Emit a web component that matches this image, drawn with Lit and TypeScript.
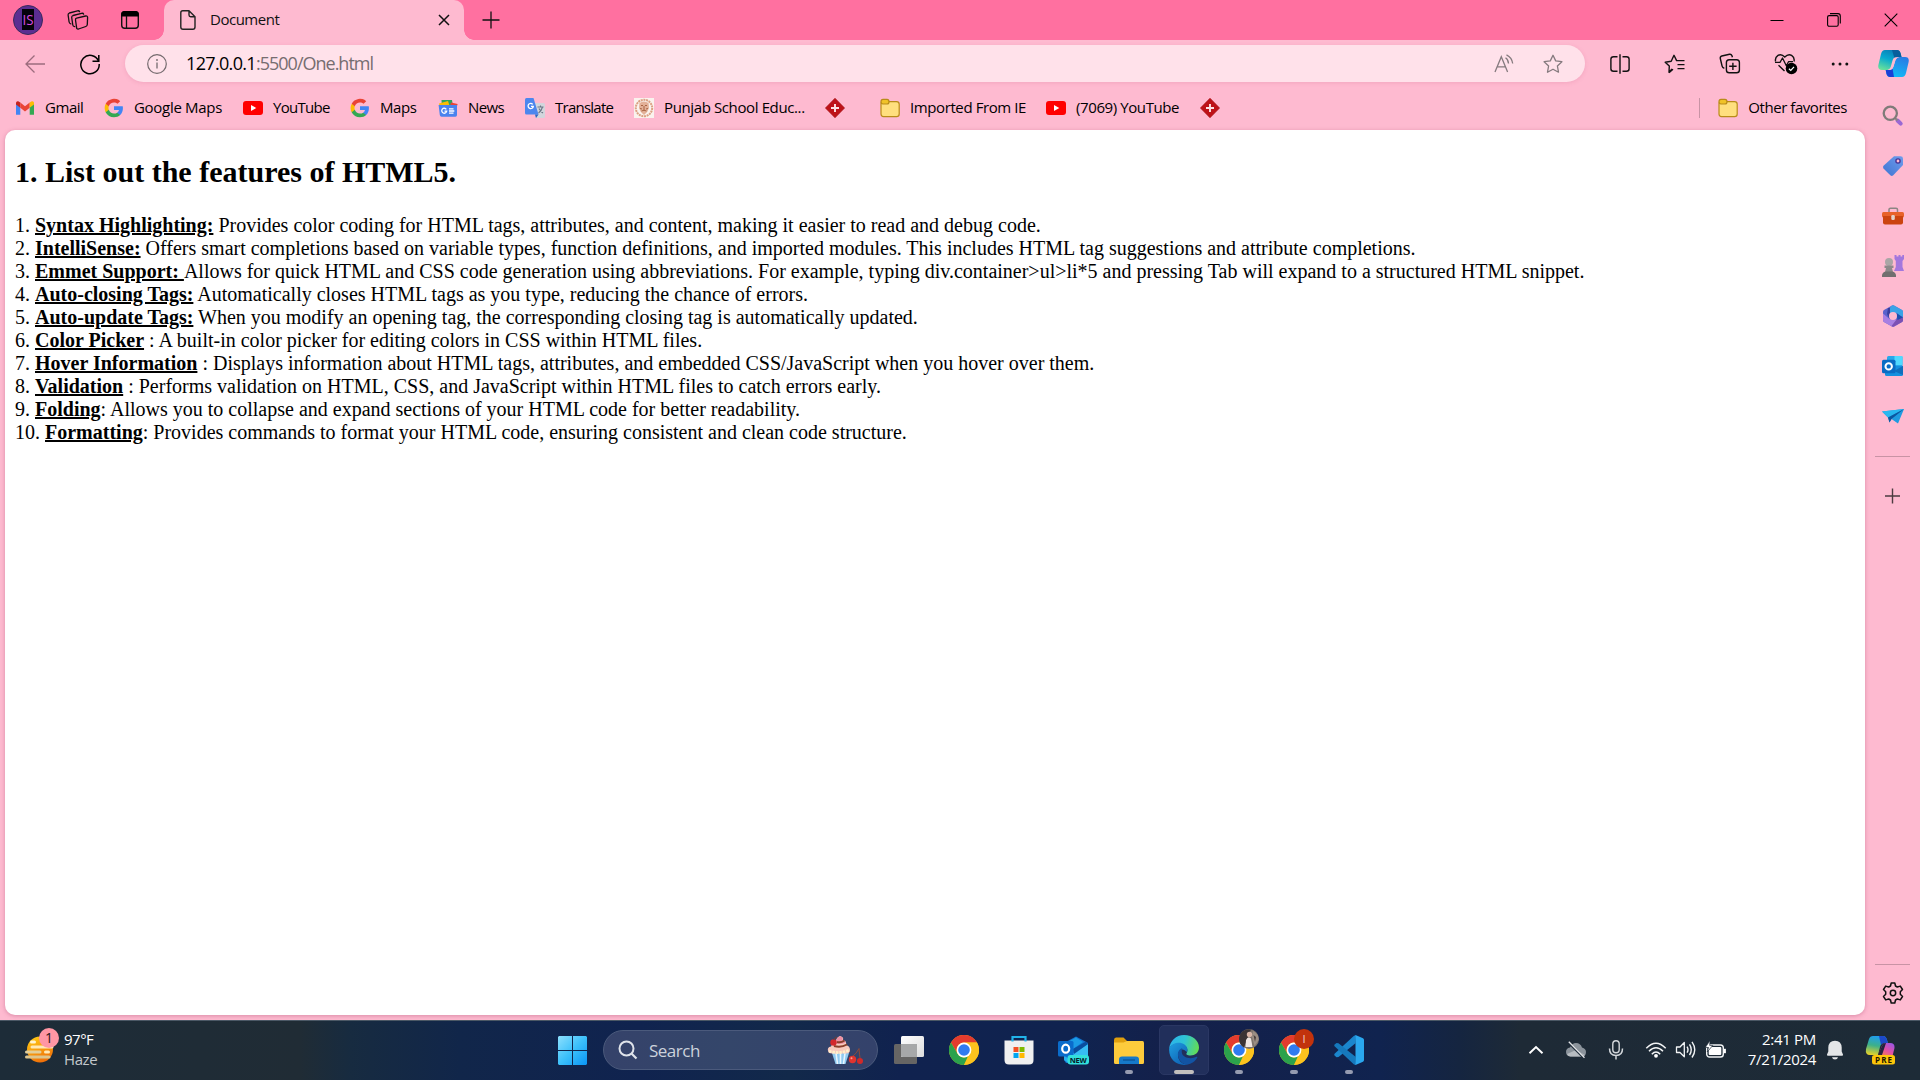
import { LitElement, html, css, svg, TemplateResult } from "lit";
import { customElement } from "lit/decorators.js";
import { classMap } from "lit/directives/class-map.js";
import { styleMap } from "lit/directives/style-map.js";

const icon = (w: number, h: number, body: TemplateResult) =>
  html`<svg width=${w} height=${h} viewBox="0 0 ${w} ${h}" fill="none" style="display:block">${body}</svg>`;

/* ---------- title bar ---------- */
const avatar = html`<svg width="30" height="30" viewBox="0 0 30 30" style="display:block">
  <circle cx="15" cy="15" r="14.5" fill="#5c2d91" stroke="#3a2a5c"/>
  <rect x="9" y="4" width="12" height="21" fill="#05020a"/>
  <text x="15" y="20" text-anchor="middle" font-family="Open Sans, sans-serif" font-size="14" fill="#d94be0" textLength="11" lengthAdjust="spacingAndGlyphs">IS</text>
</svg>`;
const workspaces = icon(22, 22, svg`<g stroke="#111" stroke-width="1.3" stroke-linejoin="round" stroke-linecap="round">
  <path d="M9.6 9.2 L18.6 7 Q20.6 6.700 20.6 8.500 L20.300 15.500 Q20.200 17 18.800 17.500 L11.500 20 Q9.700 20.400 9.600 18.600 L8.500 11 Q8.300 9.500 9.600 9.200Z"/>
  <path d="M7.700 17.600 Q6 17.400 5.800 16 L4.700 8.500 Q4.600 7 6 6.500 L14.500 4.300 Q16.300 4 16.600 5.200"/>
  <path d="M3.800 14.800 Q2.400 14.600 2.100 13 L1.100 6 Q1 4.500 2.400 4 L10.500 1.800 Q12.200 1.500 12.600 2.700"/></g>`);
const tabActions = icon(20, 20, svg`<rect x="1.700" y="1.700" width="16.600" height="16.600" rx="3" stroke="#111" stroke-width="1.400"/>
  <path d="M1.200 6.500V4.500Q1.200 1 4.500 1H15.500Q18.800 1 18.800 4.500V6.500Z" fill="#000"/><path d="M6.500 6V18" stroke="#111" stroke-width="1.300"/>`);
const page = icon(18, 22, svg`<path d="M3.500 1.700H10L16 7.700V18Q16 20.200 13.800 20.200H4Q1.800 20.200 1.800 18V3.700Q1.800 1.700 3.700 1.700Z M10 1.700V6Q10 7.700 11.700 7.700H16" stroke="#222" stroke-width="1.400" stroke-linejoin="round"/>`);
const cross = icon(12, 12, svg`<path d="M1 1L11 11M11 1L1 11" stroke="#111" stroke-width="1.500"/>`);
const plus = icon(18, 18, svg`<path d="M9 .5V17.500M.5 9H17.500" stroke="#111" stroke-width="1.300"/>`);
const minimize = icon(14, 14, svg`<path d="M.5 7.500H13.500" stroke="#000"/>`);
const restore = icon(14, 14, svg`<rect x=".6" y="2.600" width="10.600" height="10.600" rx="1.500" stroke="#000" stroke-width="1.100"/><path d="M3 .6H11Q13.300 .6 13.300 3V10.500" stroke="#000" stroke-width="1.100"/>`);
const closeWin = icon(14, 14, svg`<path d="M.7 .7L13.300 13.300M13.300 .7L.7 13.300" stroke="#000" stroke-width="1.100"/>`);

/* ---------- toolbar ---------- */
const back = icon(22, 20, svg`<path d="M21 10H2M10.500 1.500L2 10L10.500 18.500" stroke="#9c6c7d" stroke-width="1.300"/>`);
const reload = icon(22, 22, svg`<path d="M19.500 8A9.200 9.200 0 1 0 20.200 11" stroke="#000" stroke-width="1.500"/><path d="M19.800 2V8.200H13.500" stroke="#000" stroke-width="1.500"/>`);
const info = icon(20, 20, svg`<circle cx="10" cy="10" r="9.300" stroke="#746a6e" stroke-width="1.200"/><path d="M10 8.500V14.500" stroke="#746a6e" stroke-width="1.300"/><circle cx="10" cy="6" r=".9" fill="#746a6e"/>`);
const readAloud = icon(20, 20, svg`<g stroke="#857a7e" stroke-width="1.300"><path d="M1 18L7.300 2.800L13.600 18M3.200 12.800H11.400"/><path d="M11.500 3.800Q14.300 5.500 14.500 9.500M12.500 .8Q18 3.500 18.700 9.500"/></g>`);
const starPath = "M10 1.300L12.700 6.900L18.900 7.700L14.400 12L15.500 18.200L10 15.200L4.500 18.200L5.600 12L1.100 7.700L7.300 6.900Z";
const star = icon(20, 20, svg`<path d="${starPath}" stroke="#857a7e" stroke-width="1.300" stroke-linejoin="round"/>`);
const split = icon(20, 20, svg`<path d="M7.500 2.700H3.500Q.9 2.700 .9 5.200V14.800Q.9 17.300 3.500 17.300H7.500M12.500 2.700H16.500Q19.100 2.700 19.100 5.200V14.800Q19.100 17.300 16.500 17.300H12.500M10 .2V19.800" stroke="#111" stroke-width="1.400"/>`);
const favorites = icon(22, 20, svg`<path d="M8 14.900L5 18.300L5.300 12.100L1.200 8.200L7.200 7.200L10 1.300L12.600 6.600H20.500M13.500 10.600H20.500M13.500 14.600H20.500M9 15.300L5 18.600" stroke="#111" stroke-width="1.400" stroke-linejoin="round"/>`);
const collections = icon(22, 22, svg`<rect x="7.400" y="6.800" width="13" height="13" rx="2.800" stroke="#111" stroke-width="1.400"/><path d="M13.900 9.700V17M10.200 13.300H17.600" stroke="#111" stroke-width="1.400"/><path d="M5.300 15.300Q3.500 15 3.100 13.200L1.300 5.500Q1 3.500 2.800 3L10.500 1.300Q12.300 1 13 2.800L13.400 4.200" stroke="#111" stroke-width="1.400"/>`);
const essentials = icon(24, 22, svg`<path d="M1.600 8.500Q.7 4.500 4 2.300Q7.500 .5 10.800 4Q14.100 .5 17.600 2.300Q20.900 4.500 20 8.500M4.500 12.200L10.500 18" stroke="#111" stroke-width="1.400"/><path d="M1 9.300H6L8.500 5L12.300 12.700L14.500 8.700H19" stroke="#111" stroke-width="1.300" stroke-linejoin="round"/><circle cx="17.500" cy="15.500" r="5.800" fill="#000"/><path d="M14.900 15.700L16.800 17.500L20 13.800" stroke="#fff" stroke-width="1.200"/>`);
const more = icon(18, 6, svg`<circle cx="2.200" cy="3" r="1.500" fill="#111"/><circle cx="9" cy="3" r="1.500" fill="#111"/><circle cx="15.800" cy="3" r="1.500" fill="#111"/>`);
const copilot = html`<svg width="31" height="27" viewBox="0 0 31 27" style="display:block">
  <defs><linearGradient id="ca" x1=".6" y1="0" x2=".2" y2="1"><stop offset="0" stop-color="#0a7fb8"/><stop offset=".45" stop-color="#08a9cf"/><stop offset="1" stop-color="#6ae29a"/></linearGradient>
  <linearGradient id="cb" x1=".7" y1="0" x2=".3" y2="1"><stop offset="0" stop-color="#2b7be4"/><stop offset="1" stop-color="#10bdf8"/></linearGradient></defs>
  <path d="M7 0H19Q21.500 0 22.500 3L23.500 7H21Q17.500 7 16.200 10.500L13.500 17Q12.300 20 9.500 20H4Q-.8 20 .5 14.500L3 4Q4 0 7 0Z" fill="url(#ca)"/>
  <path d="M14 0H19Q21.500 0 22.500 3L23.500 7H19.500Q17.500 7 16.500 8.500Z" fill="#075f9c"/>
  <path d="M24 27H12Q9.500 27 8.500 24L7.700 20H11.500Q14.500 20 15.500 16.500L17.500 10Q18.700 7 21.500 7H27Q31.800 7 30.500 12.500L28 23Q27 27 24 27Z" fill="url(#cb)"/>
  <path d="M16 27H12Q9.500 27 8.500 24L7.700 20H11.500Q13.500 20 14.500 18.500Z" fill="#1b3fd6"/>
  <path d="M18 7.200H21.500Q18.700 7.300 17.500 10L15.500 16.500Q14.800 19.500 12 20H9.500Q11.700 19.500 12.700 17L14.500 10.500Q15.500 7.200 18 7.200Z" fill="#febad0"/>
</svg>`;

/* ---------- bookmarks ---------- */
const gmail = icon(20, 20, svg`<path d="M1 5V16.700H5.300V9Z" fill="#4285f4"/><path d="M19 5V16.700H14.700V9Z" fill="#34a853"/><path d="M1 4.800Q1.200 2.800 3.200 3.200L5.300 4.500V9.800L1 6.500Z" fill="#c5221f"/><path d="M5.300 4.500L10 8.200L14.700 4.500V9.800L10 13.400L5.300 9.800Z" fill="#ea4335"/><path d="M19 4.800Q18.800 2.800 16.800 3.200L14.700 4.500V9.800L19 6.500Z" fill="#fbbc04"/>`);
const google = icon(20, 20, svg`<g transform="translate(.7 .7) scale(.775)"><path d="M23.500 12.270c0-.85-.08-1.660-.22-2.450H12v4.640h6.450a5.520 5.520 0 0 1-2.390 3.620v3h3.860c2.260-2.090 3.580-5.160 3.580-8.810z" fill="#4285f4"/><path d="M12 24c3.240 0 5.950-1.080 7.930-2.910l-3.870-3c-1.070.72-2.440 1.150-4.060 1.150-3.130 0-5.780-2.110-6.720-4.950H1.290v3.090A12 12 0 0 0 12 24z" fill="#34a853"/><path d="M5.280 14.290A7.200 7.200 0 0 1 4.900 12c0-.8.140-1.570.38-2.290V6.620H1.290a12 12 0 0 0 0 10.760z" fill="#fbbc05"/><path d="M12 4.750c1.760 0 3.350.61 4.600 1.800l3.420-3.420A11.970 11.970 0 0 0 1.290 6.620l3.990 3.090C6.220 6.870 8.870 4.750 12 4.750z" fill="#ea4335"/></g>`);
const youtube = icon(20, 20, svg`<rect x="0" y="3" width="20" height="14" rx="3" fill="#f00"/><path d="M8 7L13.300 10L8 13Z" fill="#fff"/>`);
const news = icon(20, 20, svg`<path d="M3.500 2H14L15 9H4Z" fill="#2ea35b"/><path d="M1 5.500L10 3L12 9L2 12Z" fill="#fbbc04"/><path d="M13 4.500L19.600 6L17.500 13L11 11Z" fill="#ea4335"/><path d="M.6 7H19V17Q19 18.700 17.400 18.700H3.600Q2 18.700 1.800 17Z" fill="#4a83ee"/><path d="M8.300 11.300A2.500 2.500 0 1 0 8.700 13.200H6.500M11 10.800H15.500M11 13H16.300M11 15.200H15.500" stroke="#fff" stroke-width="1.300"/>`);
const translate = icon(20, 20, svg`<path d="M8 5H18.500Q20 5 20 6.500V18.500Q20 20 18.500 20H11Z" fill="#d2d5dc"/><path d="M1.500 0H8.500L13.500 16.500H1.500Q0 16.500 0 15V1.500Q0 0 1.500 0Z" fill="#4c86ee"/><path d="M10 16.500H13.500L11 20Z" fill="#2a62c4"/><path d="M7.700 6.300A2.600 2.600 0 1 0 8.300 8.300H6" stroke="#fff" stroke-width="1.300"/><path d="M12.500 9H18.500M15.500 7.500V9M17.500 9Q16.500 13 13.500 15M14 10.500Q15.500 13.500 18 15" stroke="#6b7685" stroke-width="1.100"/>`);
const school = icon(20, 20, svg`<rect width="20" height="20" fill="#faf3ee"/><circle cx="10" cy="10" r="8.200" stroke="#dba183" stroke-width="2" stroke-dasharray="2 .7"/><path d="M5.500 5Q10 2 14.500 5L15 10Q14 14 10 17Q6 14 5 10Z" fill="#e3b198"/><path d="M7 7.500H9M11 7.500H13M10 8V12M7.500 13Q10 11.500 12.500 13M6 10.500L8 11M14 10.500L12 11" stroke="#a96544" stroke-width="1"/>`);
const diamond = icon(20, 20, svg`<path d="M10 .2L19.600 10L10 19.800L.4 10Z" fill="#bd1218" stroke="#a30d12" stroke-width=".6"/><path d="M10 6V14M6 10H14" stroke="#fbe3e4" stroke-width="1.900"/>`);
const folder = icon(20, 20, svg`<path d="M1 6Q1 3.600 3 3.600H16.500Q19.200 3.600 19.200 6.200V16Q19.200 18.600 16.600 18.600H3.500Q1 18.600 1 16Z" fill="#ffdf7e" stroke="#b98b18" stroke-width="1.200"/><path d="M3 1.400H7Q9 1.400 9 3.700Q9 6 7 6H3Q1 6 1 3.700Q1 1.400 3 1.400Z" fill="#f0c228" stroke="#b98b18" stroke-width="1.200"/>`);

/* ---------- sidebar ---------- */
const sbSearch = icon(22, 22, svg`<path d="M15.500 15.500L18.700 18.700" stroke="#9a69d3" stroke-width="4" stroke-linecap="round"/><path d="M13 13L15.500 15.500" stroke="#8b8584" stroke-width="2"/><circle cx="8.300" cy="8.300" r="6.600" stroke="#7f7b79" stroke-width="2.300"/>`);
const sbTag = html`<svg width="22" height="22" viewBox="0 0 22 22" style="display:block"><defs><linearGradient id="tg" x1="1" y1="0" x2="0" y2="1"><stop stop-color="#6f9cec"/><stop offset="1" stop-color="#3e74d2"/></linearGradient></defs><path d="M12 1.200H18.500Q21 1.200 21 3.500V10L11 20.500Q9.700 21.500 8.300 20.300L1.500 13.500Q.5 12 1.500 10.800Z" fill="url(#tg)"/><circle cx="16" cy="6" r="2.100" fill="#ffbad2" stroke="#4a3494" stroke-width="1.400"/></svg>`;
const sbTools = icon(22, 22, svg`<path d="M7 7.500V4.500Q7 3.200 8.500 3.200H14Q15.500 3.200 15.500 4.500V7.500" stroke="#8c8583" stroke-width="1.500"/><rect x="0" y="7" width="22" height="5.500" rx="1.500" fill="#e8622a"/><path d="M1 11H21V17.500Q21 19.500 19 19.500H3Q1 19.500 1 17.500Z" fill="#cb4410"/><rect x="9.300" y="10" width="3.500" height="5" rx="1.300" fill="#e3d3cb"/>`);
const sbGames = icon(24, 24, svg`<path d="M13.500 1H15.500V2.500H17.500V1H19.500V2.500H21.300V1H23V5L21.500 7V13L23 17H13L14.800 13V7L13.500 5Z" fill="#a377dd"/><circle cx="8" cy="8" r="4" fill="#aaa6a6"/><path d="M3.500 11.500H12.500V14H11L12 18H4L5 14H3.500Z" fill="#8d8a8a"/><path d="M1 23Q.5 18 5 17.500H11Q15.500 18 15 23Z" fill="#716f6f"/>`);
const sb365 = html`<svg width="22" height="24" viewBox="0 0 22 24" style="display:block">
  <path d="M10 1.500Q11 1 12 1.500L20 6Q21 6.700 21 8V16Q21 17.300 20 18L12 22.500Q11 23 10 22.500L2 18Q1 17.300 1 16V8Q1 6.700 2 6Z" fill="#5a62cc"/>
  <path d="M10 1.500Q11 1 12 1.500L20 6Q21 6.700 21 8V14.500L14.500 9L8 9.500V4.500Q8 2.500 10 1.500Z" fill="#3aa3e6"/>
  <path d="M1 9.500L7.500 15L14.500 15.500L17 19.700L12 22.500Q11 23 10 22.500L2 18Q1 17.300 1 16Z" fill="#a87fe2"/>
  <path d="M21 14.500V16Q21 17.300 20 18L12 22.500Q10.500 23 9.500 22L14.500 15.500L20 12Z" fill="#7c50b4"/>
  <path d="M14.500 9L21 13.500L15.500 16Z" fill="#1d4fae"/><path d="M8 9.500V4L6 4L5 10L7.500 15Z" fill="#3b3f9e"/><circle cx="11" cy="12" r="4" fill="#febad0"/></svg>`;
const sbOutlook = icon(22, 22, svg`<rect x="5" y="1" width="15.500" height="18" rx="1.500" fill="#28a8ea"/><rect x="12.500" y="1" width="8" height="9" fill="#50d9ff"/><path d="M3 11H21V19.500Q21 21 19.500 21H4.500Q3 21 3 19.500Z" fill="#1490df"/><path d="M21 11L12 16L21 20Z" fill="#0f6fbd"/><rect x="0" y="4.700" width="13.500" height="13.500" rx="1.500" fill="#0a6cc4"/><circle cx="6.700" cy="11.400" r="3.200" stroke="#fff" stroke-width="2"/>`);
const sbPlane = icon(22, 20, svg`<path d="M0 5.500L22 3L16 17.500L9.500 13L7.500 16.500L6 11.500Z" fill="#1f9be0"/><path d="M0 5.500L22 3L6 11.500Z" fill="#29b8f0"/><path d="M6 11.500L22 3L9.500 13L7.500 16.500Z" fill="#0c569f"/>`);
const gear = icon(22, 22, svg`<path d="M9.200 1H12.800L13.500 4L15.300 5L18.300 4.100L20.500 7.500L18.300 9.700V12.300L20.500 14.500L18.300 17.900L15.300 17L13.500 18L12.800 21H9.200L8.500 18L6.700 17L3.700 17.900L1.500 14.500L3.700 12.300V9.700L1.500 7.500L3.700 4.100L6.700 5L8.500 4Z" stroke="#111" stroke-width="1.500" stroke-linejoin="round"/><circle cx="11" cy="11" r="2.700" stroke="#111" stroke-width="1.500"/>`);

/* ---------- taskbar ---------- */
const weather = html`<svg width="36" height="38" viewBox="0 0 36 38" style="display:block"><defs><linearGradient id="wx" x1=".3" y1="0" x2=".7" y2="1"><stop stop-color="#ffc814"/><stop offset="1" stop-color="#ee6a08"/></linearGradient></defs>
  <circle cx="15" cy="22.500" r="13" fill="url(#wx)"/>
  <g stroke-linecap="round" stroke-width="3"><path d="M6.500 15H9.500" stroke="#fff3d0"/><path d="M7 20H27" stroke="#ffe9b5"/><path d="M1.500 25H15" stroke="#e2cf9a"/><path d="M20.500 25H23.500" stroke="#ffe9b5"/><path d="M1.500 30H24" stroke="#dec58c"/></g>
  <circle cx="24" cy="11" r="10" fill="#ff96a4"/><text x="24" y="16" text-anchor="middle" font-family="Open Sans, sans-serif" font-size="14" fill="#2b1418">1</text></svg>`;
const start = html`<svg width="29" height="29" viewBox="0 0 29 29" style="display:block"><defs><linearGradient id="st" gradientUnits="userSpaceOnUse" x1="0" y1="0" x2="29" y2="29"><stop stop-color="#8de0fd"/><stop offset=".5" stop-color="#3cc0fb"/><stop offset="1" stop-color="#0a95f5"/></linearGradient></defs><path d="M1 0H14V14H0V1ZM15 0H28L29 1V14H15ZM0 15H14V29H1L0 28ZM15 15H29V28L28 29H15Z" fill="url(#st)"/></svg>`;
const lens = icon(20, 20, svg`<circle cx="8.500" cy="8.500" r="7" stroke="#dfe3ea" stroke-width="2"/><path d="M13.500 13.500L18.500 18.500" stroke="#dfe3ea" stroke-width="2.200"/>`);
const cupcake = icon(36, 30, svg`<path d="M5 18H22L18.500 29H8.500Z" fill="#8fcaf0"/><path d="M9 18L10.500 29M13.500 18V29M18 18L16.500 29" stroke="#e8f6ff" stroke-width="1.600"/>
  <path d="M1 16Q0 12 4 11.500Q5 8 9 8.500Q8 3 13 1Q17 2 16 5Q20 6 19 10Q23 11 23 15Q23 19 18 18.500H5Q1.500 18.500 1 16Z" fill="#f7c9bd"/>
  <path d="M9 8.500Q8.500 3 13 1Q16.500 2 15.500 5L19 7Q16 10 9 8.500Z" fill="#ee8fa2"/><path d="M7 11Q14 13 20 9.500M10 7Q14 8 17.500 5.500" stroke="#8a3f2b" stroke-width="2"/><path d="M2 16Q12 19.500 22.500 15" stroke="#fff0c9" stroke-width="2.800" stroke-dasharray="2.500 1"/>
  <circle cx="6.500" cy="7.500" r="3.200" fill="#d3262b"/><path d="M6.500 5Q8 2.500 10 2" stroke="#7e3b2c"/>
  <path d="M25 22Q30 18 32 13.500Q32.500 20 33 23" stroke="#8d4a3a"/><circle cx="25.500" cy="24.500" r="3.700" fill="#e0342f"/><circle cx="33" cy="26" r="3" fill="#d02a2a"/><circle cx="24.500" cy="23.300" r="1" fill="#ff9d8c"/>`);
const taskView = html`<svg width="30" height="28" viewBox="0 0 30 28" style="display:block"><defs><linearGradient id="tv" x1="0" y1="0" x2="1" y2="1"><stop stop-color="#fff"/><stop offset="1" stop-color="#dcdcdc"/></linearGradient></defs><rect x="0" y="8" width="23" height="20" rx="1.500" fill="#666564"/><rect x="7" y="0" width="23" height="21" rx="1.500" fill="url(#tv)"/><path d="M7 8H23V21H8.500L7 19.500Z" fill="#a7a8a9"/></svg>`;
const chrome = icon(30, 30, svg`<circle cx="15" cy="15" r="15" fill="#fbc116"/><path d="M2 7.500A15 15 0 0 1 28 7.500H15A7.500 7.500 0 0 0 8.500 18.700Z" fill="#e33b2e"/><path d="M2 7.500L8.500 18.700A7.500 7.500 0 0 0 18.800 21.500L15 30A15 15 0 0 1 2 7.500Z" fill="#2ba24c"/><path d="M15 7.500H28A15 15 0 0 1 15 30L21.500 18.700A7.500 7.500 0 0 0 15 7.500Z" fill="#fcc31e"/><circle cx="15" cy="15" r="7.400" fill="#fff"/><circle cx="15" cy="15" r="5.800" fill="#2f7bf0"/>`);
const store = icon(30, 30, svg`<path d="M.5 5.500H29.500V25Q29.500 29.500 25 29.500H5Q.5 29.500 .5 25Z" fill="#f0f0f0"/><path d="M9.500 12H14.500V17H9.500Z" fill="#f25022"/><path d="M15.500 12H20.500V17H15.500Z" fill="#7fba00"/><path d="M9.500 18H14.500V23H9.500Z" fill="#00a4ef"/><path d="M15.500 18H20.500V23H15.500Z" fill="#ffb900"/><path d="M8.500 6.500V2H21.500V6.500" stroke="#21b3ea" stroke-width="2.200"/>`);
const outlook = html`<svg width="32" height="30" viewBox="0 0 32 30" style="display:block"><path d="M6 8L18 1.500L30 8V25Q30 28 27 28H8L6 25Z" fill="#1373cf"/><path d="M8 8L18 2.500L25 7L15 14Z" fill="#1b9de6"/><path d="M30 9L14 19L18 27H30Z" fill="#37bdf4"/><path d="M15 14L28 6.500L30 9L16 19Z" fill="#0a4e9e"/><path d="M6 20L16 29L11 28Q7 26 6 25Z" fill="#26b0ef"/><rect x="0" y="6" width="15.500" height="15.500" rx="1.500" fill="#0a6ccb"/><ellipse cx="7.700" cy="13.700" rx="3.500" ry="4" fill="none" stroke="#fff" stroke-width="2.200"/><rect x="9.500" y="20" width="21.500" height="9.500" rx="3" fill="#32e0dc"/><text x="20.300" y="27.700" text-anchor="middle" font-family="Open Sans, sans-serif" font-weight="700" font-size="7.500" fill="#06202c" textLength="17">NEW</text></svg>`;
const explorer = icon(30, 30, svg`<path d="M0 5Q0 2.500 2 2.500H9.500L13 6V9H0Z" fill="#e09f0e"/><path d="M0 7.500H9.500L13 6H28.500Q30 6 30 8V27.500Q30 29 28.500 29H1.500Q0 29 0 27.500Z" fill="#fdcb3c"/><path d="M5 29V24.500Q5 21.500 8 21.500H22Q25 21.500 25 24.500V29Z" fill="#1679c9"/><path d="M9 25H21" stroke="#0c4f90" stroke-width="1.200"/>`);
const edge = html`<svg width="30" height="30" viewBox="0 0 30 30" style="display:block"><defs><linearGradient id="e1" x1="0" y1=".3" x2="1" y2=".5"><stop stop-color="#2bb3ec"/><stop offset=".5" stop-color="#2fc4d4"/><stop offset="1" stop-color="#63dd55"/></linearGradient><linearGradient id="e2" x1="0" y1="0" x2=".7" y2="1"><stop stop-color="#1f9fe0"/><stop offset="1" stop-color="#0f63b6"/></linearGradient></defs>
  <path d="M.2 13.500C1 6 7 0 15 0C24 0 30 6 30 12.500C30 17.500 26 20.500 21.500 20.500C18 20.500 17 19.300 17.500 18.200C19.500 16 18.500 11 13.500 9.500C8 8 3 9 .2 13.500Z" fill="url(#e1)"/>
  <path d="M.2 13.500C3 7.500 11 6.500 15.500 9.500C19 12 18.800 15.500 17.500 17C15 12.500 9 14 9 20C9 25.500 13 29 18 29.700C8 31.500 -.8 24 .2 13.500Z" fill="url(#e2)"/>
  <path d="M13.300 13C9.500 14.500 8.600 18 9 20.500C9.800 25.500 13.500 29.300 18 29.700C22.500 29 26.500 26 28.300 22.500C28.600 21.800 28 21.500 27.500 21.800C22 24.500 14 23 12.900 18C12.500 16 13 14.500 13.300 13Z" fill="#1254a4"/></svg>`;
const photoBadge = icon(20, 20, svg`<circle cx="10" cy="10" r="10" fill="#7d736c"/><path d="M4 2Q8 -.5 12 .5L9 8L5 18.500Q0 15 0 10Q0 5 4 2Z" fill="#3a3335"/><path d="M7 11Q9 7 12 9.500L13.500 18H6.500Z" fill="#efe6e3"/><path d="M14 2Q20 5 19.700 11L15.500 17L13 8Z" fill="#9b8e84"/><path d="M14.500 6L17 8L16 13Z" fill="#4a3f3d"/><circle cx="10.500" cy="5.500" r="2.700" fill="#d8b5a6"/>`);
const letterBadge = html`<svg width="20" height="20" viewBox="0 0 20 20" style="display:block"><circle cx="10" cy="10" r="10" fill="#c2330c"/><text x="10" y="14" text-anchor="middle" font-family="Open Sans, sans-serif" font-size="11" fill="#f4cfc4">I</text></svg>`;
const vscode = icon(30, 30, svg`<path d="M21.500 8.300L4.500 22L2.500 22.300L.3 20.300V19L20 .7L22 .2Z" fill="#1b86cd"/><path d="M21.500 21.700L4.500 8.200L2.500 7.900L.3 9.700V11L20 29.400L22 29.900Z" fill="#1679bd"/><path d="M21.500 0L29 3.200Q30 3.700 30 5V25Q30 26.300 29 26.800L21.500 30Z" fill="#2aa7ee"/>`);

const up = icon(16, 10, svg`<path d="M1.500 8.300L8 2L14.500 8.300" stroke="#fff" stroke-width="1.900"/>`);
const cloudOff = icon(22, 18, svg`<path d="M5.500 15.500Q1 15 1 11Q1 7 5 6.500Q7 2 11 2Q15.500 2 17 6.500Q21 7.500 21 11Q21 15.500 16.500 15.500Z" fill="#8b939b"/><path d="M2 13L11 9L20 14Q18.500 15.500 16.500 15.500H5.500Q3 15.500 2 13Z" fill="#b7bcc1"/><path d="M3 1L19 17" stroke="#1e2b38" stroke-width="2.400"/><path d="M3.800 .8L19.500 16.800" stroke="#e4e6e8" stroke-width="1.300"/>`);
const mic = icon(16, 22, svg`<rect x="4.800" y="1.700" width="6.400" height="12" rx="3.200" stroke="#d3d7db" stroke-width="1.400"/><path d="M1.500 9.500Q1.500 16.500 8 16.500Q14.500 16.500 14.500 9.500M8 16.500V20.500" stroke="#d3d7db" stroke-width="1.500"/>`);
const wifi = icon(22, 18, svg`<g stroke="#f2f4f5" stroke-width="1.500"><path d="M1.300 7.300Q11 -2.700 20.700 7.300M4 10.300Q11 3.200 18 10.300M6.800 13.200Q11 8.900 15.200 13.200"/></g><circle cx="11" cy="14.800" r="1.900" fill="#fff"/>`);
const volume = icon(22, 20, svg`<path d="M1.500 7H5L9.300 2.500V16.800L5 12.500H1.500Z" stroke="#f2f4f5" stroke-width="1.300" stroke-linejoin="round"/><path d="M12 6.700Q14 9.700 12 12.700M14.500 4.300Q18 9.700 14.500 15M17 1.800Q22.500 9.700 17 17.500" stroke="#f2f4f5" stroke-width="1.400"/>`);
const battery = icon(22, 18, svg`<rect x="1.700" y="4" width="16.600" height="12" rx="2.800" stroke="#f2f4f5" stroke-width="1.400"/><rect x="3.700" y="6" width="12.600" height="8" rx="1" fill="#fff"/><path d="M19.800 7.800V12.200" stroke="#fff" stroke-width="2.200"/><path d="M5 -.5L.3 6.500H3.500L2.200 11L7.800 4.400H4.700Z" fill="#fff" stroke="#1e2b38" stroke-width=".7"/>`);
const bell = icon(18, 20, svg`<path d="M9 .7Q15.500 1 15.700 7.500V11.500L17 14.500Q17.200 15.800 16 15.800H2Q.8 15.800 1 14.500L2.300 11.500V7.500Q2.500 1 9 .7Z" fill="#e3e5e7"/><path d="M6 17.300H12Q11.500 19.500 9 19.500Q6.500 19.500 6 17.300Z" fill="#e3e5e7"/>`);
const copilotPre = html`<svg width="31" height="30" viewBox="0 0 31 30" style="display:block"><defs><linearGradient id="p1" x1=".5" y1="0" x2=".3" y2="1"><stop stop-color="#1f9df0"/><stop offset=".5" stop-color="#3cb08a"/><stop offset="1" stop-color="#e6d22a"/></linearGradient><linearGradient id="p2" x1="1" y1="0" x2=".3" y2="1"><stop stop-color="#8f57ee"/><stop offset=".6" stop-color="#e250a4"/><stop offset="1" stop-color="#f27a52"/></linearGradient></defs>
  <path d="M8 1H18Q21 1 22 5L23 8H19Q16 8 15 12L13 20H5Q0 20 1 14L4 4Q5 1 8 1Z" fill="url(#p1)"/><path d="M14 1H18Q21 1 22 5L23 8H19Q17 8 16 10Z" fill="#1c49c8"/><path d="M21 8H25Q30 8 29.500 13L27.500 21H13L16.500 12Q18 8 21 8Z" fill="url(#p2)"/><path d="M16.500 12Q18 8 21 8L17 20H13Z" fill="#26223f"/>
  <rect x="7" y="20" width="23" height="9.500" rx="2.500" fill="#fdc60a"/><text x="18.500" y="27.900" text-anchor="middle" font-family="Open Sans, sans-serif" font-weight="700" font-size="8" fill="#1c1600" textLength="17">PRE</text></svg>`;

@customElement("title-bar")
class TitleBar extends LitElement {
  static styles = css`
    :host { display: flex; height: 40px; background: #ff70a0; font: 15px "Open Sans", sans-serif; color: #111; }
    .left { display: flex; align-items: center; width: 164px; box-sizing: border-box; padding-left: 13px; }
    .ws { margin-left: 24px; }
    .ta { margin-left: 31px; }
    .tab { position: relative; display: flex; align-items: center; width: 300px; box-sizing: border-box; padding: 0 14px 0 15px; background: #febad0; border-radius: 10px 10px 0 0; }
    .tab::before, .tab::after { content: ""; position: absolute; bottom: 0; width: 10px; height: 10px; }
    .tab::before { left: -10px; background: radial-gradient(circle at 0 0, transparent 9.500px, #febad0 10px); }
    .tab::after { right: -10px; background: radial-gradient(circle at 100% 0, transparent 9.500px, #febad0 10px); }
    .name { flex: 1; margin-left: 13px; padding-bottom: 2px; letter-spacing: -0.480px; }
    .new { display: flex; align-items: center; margin-left: 18px; flex: 1; }
    .win { display: flex; align-items: center; gap: 43px; padding-right: 22px; }
  `;
  render() {
    return html`<div class="left">${avatar}<span class="ws">${workspaces}</span><span class="ta">${tabActions}</span></div>
      <div class="tab">${page}<span class="name">Document</span>${cross}</div>
      <div class="new">${plus}</div>
      <div class="win">${minimize}${restore}${closeWin}</div>`;
  }
}

@customElement("tool-bar")
class ToolBar extends LitElement {
  static styles = css`
    :host { display: flex; align-items: center; height: 47px; font: 18px "Open Sans", sans-serif; }
    .nav { display: flex; align-items: center; width: 125px; box-sizing: border-box; padding-left: 24px; gap: 33px; }
    .address { display: flex; align-items: center; width: 1460px; height: 37px; box-sizing: border-box; padding: 0 22px 0 22px; border-radius: 19px; background: #ffe1ea; box-shadow: 0 1px 4px rgba(200, 90, 130, .2); }
    .url { flex: 1; margin-left: 19px; padding-bottom: 1px; letter-spacing: -0.660px; color: #000; }
    .rest { color: #766d70; letter-spacing: -1px; }
    .fav { margin-left: 29px; }
    .tools { display: flex; align-items: center; width: 255px; }
    .cell { display: flex; justify-content: center; width: 55px; flex: none; }
    .first { margin-left: 7px; }
    .heart { box-sizing: border-box; padding-left: 3px; }
    .pilot { width: 52px; }
  `;
  render() {
    return html`<div class="nav">${back}${reload}</div>
      <div class="address">${info}<span class="url">127.0.0.1<span class="rest">:5500/One.html</span></span>${readAloud}<span class="fav">${star}</span></div>
      <div class="tools"><span class="cell first">${split}</span><span class="cell">${favorites}</span><span class="cell">${collections}</span><span class="cell heart">${essentials}</span><span class="cell">${more}</span><span class="cell pilot">${copilot}</span></div>`;
  }
}

const BOOKMARKS: [number, TemplateResult, string, number][] = [
  [89, gmail, "Gmail", -0.45], [139, google, "Google Maps", -0.3], [107, youtube, "YouTube", -0.7], [88, google, "Maps", -0.45],
  [87, news, "News", -0.6], [109, translate, "Translate", -0.75], [191, school, "Punjab School Educ...", -0.38], [55, diamond, "", 0],
  [166, folder, "Imported From IE", -0.4], [154, youtube, "(7069) YouTube", -0.4], [20, diamond, "", 0],
];

@customElement("bookmark-bar")
class BookmarkBar extends LitElement {
  static styles = css`
    :host { display: flex; align-items: center; height: 43px; box-sizing: border-box; padding: 0 0 1px 15px; font: 15px "Open Sans", sans-serif; letter-spacing: -0.450px; color: #000; }
    .item { display: flex; align-items: center; gap: 10px; flex: none; white-space: nowrap; }
    .label { padding-bottom: 2px; }
    .other { display: flex; align-items: center; gap: 10px; margin-left: auto; margin-right: 3px; border-left: 1px solid #c893a5; padding-left: 18px; height: 20px; white-space: nowrap; }
  `;
  render() {
    return html`${BOOKMARKS.map(([w, i, t, ls]) => html`<div class="item" style=${styleMap({ width: w + "px", letterSpacing: ls + "px" })}>${i}${t ? html`<span class="label">${t}</span>` : ""}</div>`)}
      <div class="other">${folder}<span class="label">Other favorites</span></div>`;
  }
}

@customElement("side-bar")
class SideBar extends LitElement {
  static styles = css`
    :host { display: flex; flex-direction: column; align-items: center; width: 55px; box-sizing: border-box; padding-top: 4px; color: #222; }
    .cell { display: flex; align-items: center; justify-content: center; height: 50px; flex: none; }
    .line { width: 35px; height: 1px; background: #c893a5; flex: none; }
    .upper { margin-top: 15px; }
    .add { height: 78px; opacity: .75; }
    .fill { flex: 1; }
    .set { height: 56px; }
  `;
  render() {
    return html`${[sbSearch, sbTag, sbTools, sbGames, sb365, sbOutlook, sbPlane].map(i => html`<div class="cell">${i}</div>`)}
      <div class="line upper"></div><div class="cell add">${icon(16, 16, svg`<path d="M7.500 .5V15.500M0 8H15" stroke="#111" stroke-width="1.400"/>`)}</div>
      <div class="fill"></div><div class="line"></div><div class="cell set">${gear}</div>`;
  }
}

const FEATURES: [string, string][] = [
  ["Syntax Highlighting:", " Provides color coding for HTML tags, attributes, and content, making it easier to read and debug code."],
  ["IntelliSense:", " Offers smart completions based on variable types, function definitions, and imported modules. This includes HTML tag suggestions and attribute completions."],
  ["Emmet Support: ", "Allows for quick HTML and CSS code generation using abbreviations. For example, typing div.container>ul>li*5 and pressing Tab will expand to a structured HTML snippet."],
  ["Auto-closing Tags:", " Automatically closes HTML tags as you type, reducing the chance of errors."],
  ["Auto-update Tags:", " When you modify an opening tag, the corresponding closing tag is automatically updated."],
  ["Color Picker", " : A built-in color picker for editing colors in CSS within HTML files."],
  ["Hover Information", " : Displays information about HTML tags, attributes, and embedded CSS/JavaScript when you hover over them."],
  ["Validation", " : Performs validation on HTML, CSS, and JavaScript within HTML files to catch errors early."],
  ["Folding", ": Allows you to collapse and expand sections of your HTML code for better readability."],
  ["Formatting", ": Provides commands to format your HTML code, ensuring consistent and clean code structure."],
];

@customElement("web-page")
class WebPage extends LitElement {
  static styles = css`
    :host { display: block; box-sizing: border-box; padding: 25px 10px; background: #fff; border-radius: 10px; box-shadow: 0 1px 4px rgba(150, 50, 90, .35); font: 20px/23px "Liberation Serif", "Times New Roman", serif; color: #000; }
    h2 { margin: 0 0 25px; font-size: 30px; line-height: 34px; font-weight: 700; }
    .row { white-space: pre; height: 23px; }
    u { font-weight: 700; }
  `;
  render() {
    return html`<h2>1. List out the features of HTML5.</h2>
      ${FEATURES.map(([n, d], i) => html`<div class="row">${i + 1}. <u>${n}</u>${d}</div>`)}`;
  }
}

const APPS: { icon: TemplateResult; open?: boolean; active?: boolean; badge?: TemplateResult }[] = [
  { icon: taskView }, { icon: chrome }, { icon: store }, { icon: outlook }, { icon: explorer, open: true },
  { icon: edge, open: true, active: true }, { icon: chrome, open: true, badge: photoBadge },
  { icon: chrome, open: true, badge: letterBadge }, { icon: vscode, open: true },
];

@customElement("task-bar")
class TaskBar extends LitElement {
  static styles = css`
    :host { display: flex; align-items: center; height: 60px; box-sizing: border-box; box-shadow: inset 0 1px #4b5865; font: 15px "Open Sans", sans-serif; color: #fff;
      background: linear-gradient(90deg, #1d2c38 0, #202c35 300px, #172b40 350px, #11264a 460px, #10234f 640px, #12294a 790px, #10224f 900px, #10234f 1080px, #14204a 1180px, #10234f 1380px, #152540 1460px, #1e2a36 1520px, #1d2b37 1920px); }
    .weather { display: flex; width: 547px; box-sizing: border-box; padding-left: 25px; gap: 3px; align-items: center; }
    .wx { margin-top: -8px; }
    .stack { display: flex; flex-direction: column; line-height: 20px; letter-spacing: -0.500px; padding-bottom: 3px; }
    .dim { color: #c3c8cc; letter-spacing: -0.400px; }
    .start { display: flex; justify-content: center; width: 51px; margin-right: 5px; }
    .search { display: flex; align-items: center; width: 275px; height: 40px; box-sizing: border-box; padding: 0 14px 0 14px; margin-right: 6px; border-radius: 20px; border: 1px solid #4b5a7c; background: linear-gradient(90deg, #35426a, #34466a 45%, #34426b); font-size: 17px; letter-spacing: -0.500px; color: #ccd2dc; }
    .hint { flex: 1; margin-left: 11px; }
    .apps { display: flex; gap: 5px; }
    .app { position: relative; display: flex; align-items: center; justify-content: center; width: 50px; height: 50px; box-sizing: border-box; border-radius: 5px; }
    .active { background: #212f5b; border: 1px solid #2a3763; }
    .mark { position: absolute; bottom: 1px; left: 21px; width: 8px; height: 4px; border-radius: 2px; background: #959bb0; }
    .active .mark { left: 14px; bottom: 0; width: 20px; background: #c2bfbd; }
    .badge { position: absolute; top: 4px; left: 25px; }
    .tray { display: flex; align-items: center; margin-left: auto; padding-right: 24px; }
    .cloud { margin-left: 21px; }
    .mic { margin-left: 21px; }
    .wifi { margin-left: 21px; }
    .near { margin-left: 8px; }
    .clock { display: flex; flex-direction: column; align-items: flex-end; line-height: 20px; width: 80px; margin: 0 10px 0 9px; padding-bottom: 2px; letter-spacing: -0.300px; }
    .pre { margin-left: 21px; }
  `;
  render() {
    return html`
      <div class="weather"><span class="wx">${weather}</span><div class="stack"><span>97°F</span><span class="dim">Haze</span></div></div>
      <div class="start">${start}</div>
      <div class="search">${lens}<span class="hint">Search</span>${cupcake}</div>
      <div class="apps">${APPS.map(a => html`<div class=${classMap({ app: true, active: !!a.active })}>${a.icon}${a.badge ? html`<span class="badge">${a.badge}</span>` : ""}${a.open ? html`<span class="mark"></span>` : ""}</div>`)}</div>
      <div class="tray">
        ${up}<span class="cloud">${cloudOff}</span><span class="mic">${mic}</span>
        <span class="wifi">${wifi}</span><span class="near">${volume}</span><span class="near">${battery}</span>
        <div class="clock"><span>2:41 PM</span><span>7/21/2024</span></div>
        ${bell}<span class="pre">${copilotPre}</span>
      </div>`;
  }
}

@customElement("app-root")
class AppRoot extends LitElement {
  static styles = css`
    :host { display: flex; flex-direction: column; width: 1920px; height: 1080px; overflow: hidden; background: #febad0; }
    .body { display: flex; flex: 1; min-height: 0; }
    .main { display: flex; flex-direction: column; width: 1865px; }
    bookmark-bar { width: 1850px; }
    web-page { flex: 1; margin: 0 0 5px 5px; }
    side-bar { height: 934px; }
  `;
  render() {
    return html`<title-bar></title-bar><tool-bar></tool-bar>
      <div class="body">
        <div class="main"><bookmark-bar></bookmark-bar><web-page></web-page></div>
        <side-bar></side-bar>
      </div>
      <task-bar></task-bar>`;
  }
}
